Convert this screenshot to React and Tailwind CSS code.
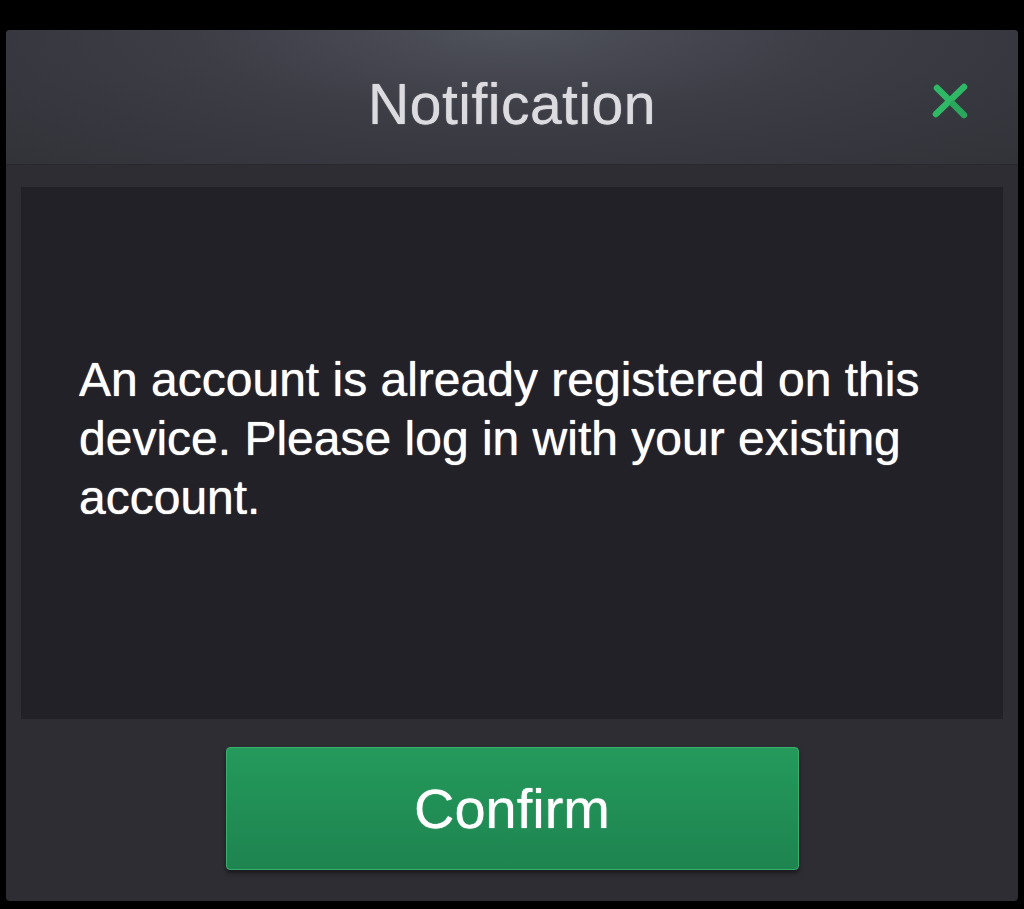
const CloseIcon = () => (
  <svg width="44" height="44" viewBox="0 0 44 44" fill="none">
    <path d="M36 7 L8 34" stroke="#2fb866" strokeWidth="6.5" strokeLinecap="round" />
    <path d="M9 8 L21 20" stroke="#2fb866" strokeWidth="6.5" strokeLinecap="round" />
    <path d="M25 24 L36 35" stroke="#2aa75c" strokeWidth="6.5" strokeLinecap="round" />
  </svg>
);

export default function App() {
  return (
    <div
      className="w-[1024px] h-[909px] bg-black pt-[30px] pl-[6px] pr-[6px] pb-[8px] flex"
      style={{ fontFamily: '"Liberation Sans", Arial, sans-serif' }}
    >
      <div className="flex-1 flex flex-col bg-[#2d2d33] rounded-sm overflow-hidden">
        {/* header */}
        <div className="relative h-[135px] shrink-0 flex items-center justify-center border-b border-[#28282d] bg-[radial-gradient(ellipse_at_50%_0%,#4f515b_0%,#3c3d45_45%,#323339_100%)]">
          <h1 className="text-[57px] text-[#dcdce0] tracking-[0.5px] leading-none mt-[14px] [text-shadow:0_0_1px_#dcdce0]">Notification</h1>
          <button className="absolute right-[46px] top-[50px]">
            <CloseIcon />
          </button>
        </div>

        {/* message */}
        <div className="mx-[15px] mt-[22px] h-[532px] bg-[#222127] flex items-center px-[58px] pb-[30px]">
          <p className="text-[48px] leading-[59px] text-white [text-shadow:0_0_1px_#ffffff]">
            An account is already registered on this device. Please log in with your existing account.
          </p>
        </div>

        {/* actions */}
        <div className="flex-1 flex justify-center pt-[28px]">
          <button className="w-[573px] h-[123px] rounded-[4px] border border-[#37b06c] bg-gradient-to-b from-[#249a5b] to-[#1e8450] shadow-[0_3px_4px_rgba(0,0,0,0.45)] text-white text-[56px] leading-none flex items-center justify-center [text-shadow:0_0_1px_#ffffff]">
            Confirm
          </button>
        </div>
      </div>
    </div>
  );
}
